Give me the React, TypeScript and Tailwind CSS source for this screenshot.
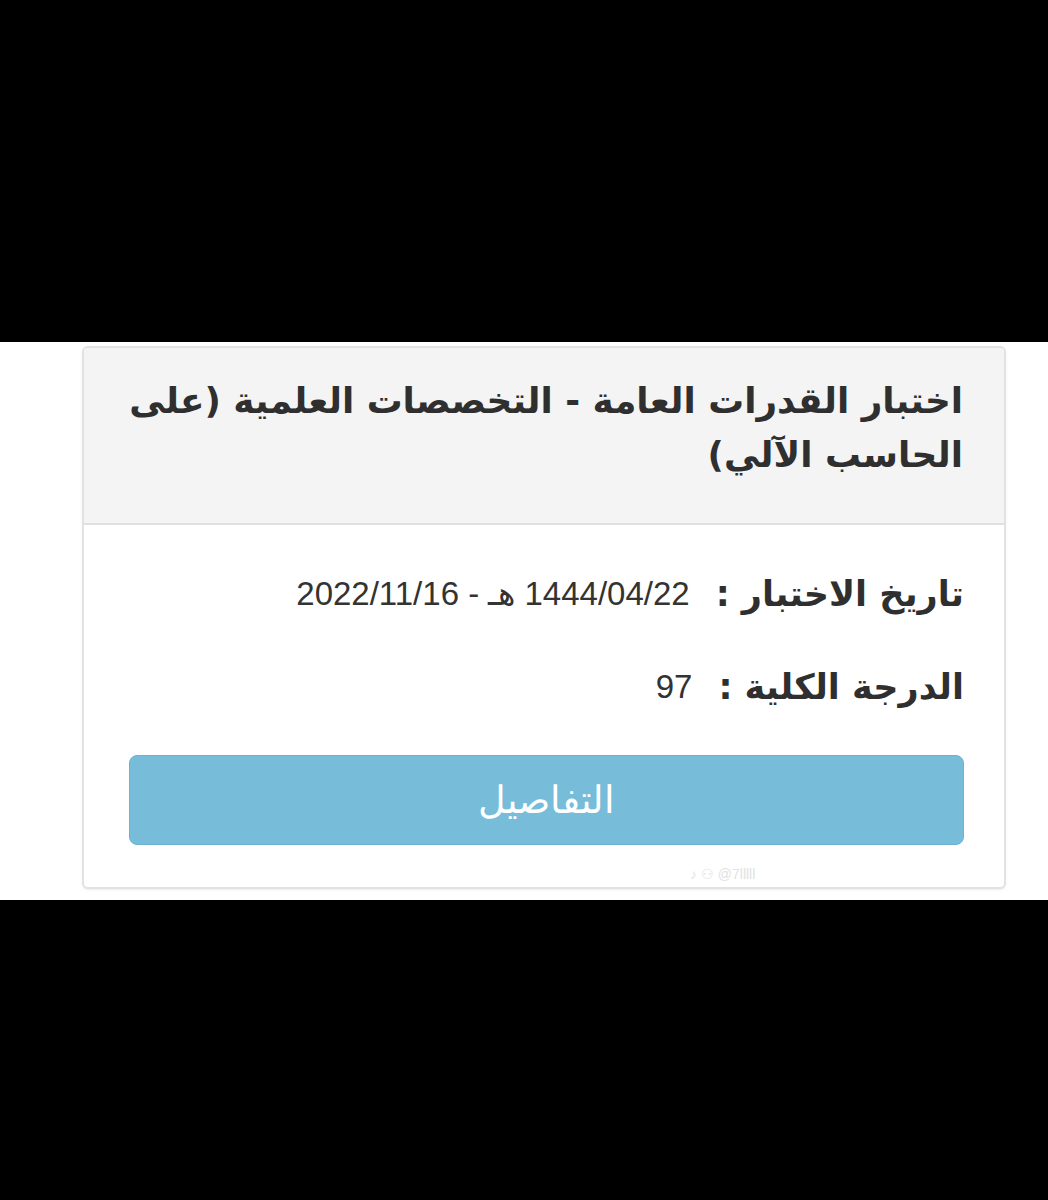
export default function App() {
  return (
    <div className="flex h-[1200px] w-[1048px] flex-col bg-black">
      <div className="h-[342px]" />
      <div className="h-[558px] bg-white pr-[42px] pl-[82px] pt-[4px]">
        <ResultCard />
      </div>
    </div>
  );
}

function ResultCard() {
  return (
    <div
      dir="rtl"
      className="relative h-[543px] overflow-hidden rounded-[6px] border-2 border-[#e2e2e2] bg-white shadow-[0_1px_2px_rgba(0,0,0,0.08)]"
    >
      {/* Header */}
      <div className="h-[177px] border-b-2 border-[#e0e0e0] bg-[#f4f4f4] pr-[41px] pl-[30px] pt-[26px]">
        <h1 className="font-['DejaVu_Sans',sans-serif] text-[35.8px] leading-[54px] font-bold text-[#2f2f2f]">
          اختبار القدرات العامة - التخصصات العلمية (على الحاسب الآلي)
        </h1>
      </div>

      {/* Body */}
      <div className="pr-[40px] pl-[45px] pt-[44px]">
        <div className="flex h-[50px] items-center">
          <span className="font-['DejaVu_Sans',sans-serif] text-[35px] font-bold text-[#2f2f2f]">
            تاريخ الاختبار :
          </span>
          <span className="mr-[26px] font-['Liberation_Sans',sans-serif] text-[33px] text-[#333]">
            1444/04/22 هـ - 2022/11/16
          </span>
        </div>
        <div className="mt-[43px] flex h-[50px] items-center">
          <span className="font-['DejaVu_Sans',sans-serif] text-[35px] font-bold text-[#2f2f2f]">
            الدرجة الكلية :
          </span>
          <span className="mr-[26px] font-['Liberation_Sans',sans-serif] text-[33px] text-[#333]">
            97
          </span>
        </div>

        <button className="mt-[43px] flex h-[90px] w-full items-center justify-center rounded-[8px] border border-[#6db3d1] bg-[#77bcd9] font-['DejaVu_Sans',sans-serif] text-[38px] font-extralight text-white">
          التفاصيل
        </button>
      </div>

      {/* faint watermark */}
      <div
        dir="ltr"
        className="absolute bottom-[2px] left-[606px] font-['Liberation_Sans',sans-serif] text-[14px] text-[#e2e2e2]"
      >
        ♪ ⚇ @7lllll
      </div>
    </div>
  );
}
